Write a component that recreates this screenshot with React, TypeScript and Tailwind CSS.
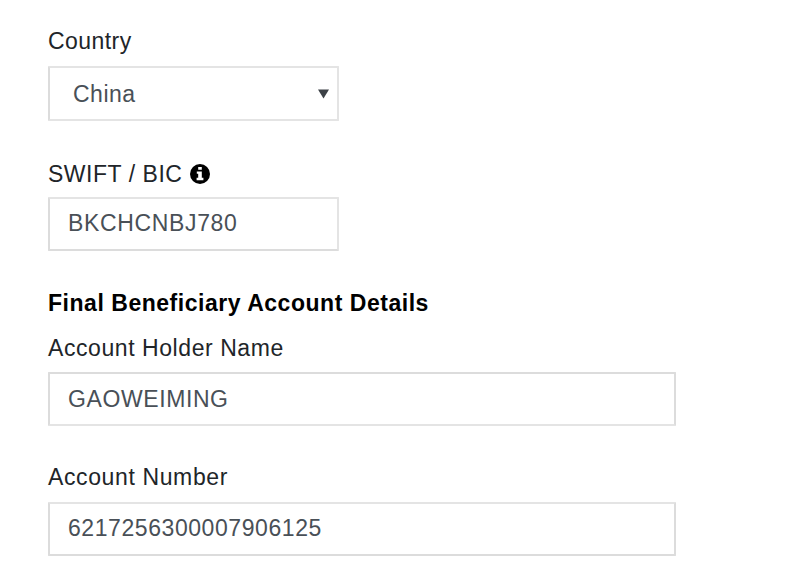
import React from "react";

function InfoIcon() {
  return (
    <svg viewBox="0 0 20 20" className="ml-[8px] h-[20px] w-[20px] shrink-0">
      <circle cx="10" cy="10" r="10" fill="#000" />
      <path d="M8.2 3h3.6v2.8H8.2zM6.8 7.4h5v6.4h1.6v2.4H6.6v-2.4h1.6V9.8H6.8z" fill="#fff" />
    </svg>
  );
}

const box = "flex items-center rounded-[1px] bg-white text-[#495057]";
const label = "flex h-[28px] items-center whitespace-nowrap";

export default function App() {
  return (
    <main className="h-[582px] w-[796px] overflow-hidden bg-white pl-[48px] pt-[27px] font-['Liberation_Sans',Arial,sans-serif] text-[23px] text-[#212529]">
      <div className={label}><span className="tracking-[0.45px]">Country</span></div>
      <div className={`${box} mt-[11px] h-[55px] w-[291px] justify-between border-2 border-b-[#e4e4e4] border-l-[#dcdcdc] border-r-[#e4e4e4] border-t-[#e4e4e4] pl-[23px] pr-[8px]`}>
        <span className="pt-px tracking-[0.5px]">China</span>
        <svg viewBox="0 0 12 10" className="h-[10px] w-[11px]" fill="#3c4146"><path d="M0 0h12L6 10z" /></svg>
      </div>
      <div className={`${label} mt-[39px]`}><span className="tracking-[0.53px]">SWIFT / BIC</span><InfoIcon /></div>
      <div className={`${box} mt-[9px] h-[54px] w-[291px] border-2 border-b-[#dcdcdc] border-l-[#dcdcdc] border-r-[#e4e4e4] border-t-[#e4e4e4] pb-[2px] pl-[18px]`}><span className="tracking-[0.65px]">BKCHCNBJ780</span></div>
      <div className={`${label} mt-[38px] font-bold text-black`}><span className="tracking-[0.53px]">Final Beneficiary Account Details</span></div>
      <div className={`${label} mt-[17px]`}><span className="tracking-[0.57px]">Account Holder Name</span></div>
      <div className={`${box} mt-[10px] h-[54px] w-[628px] border-2 border-b-[#e4e4e4] border-l-[#dcdcdc] border-r-[#dcdcdc] border-t-[#dcdcdc] pl-[18px]`}><span className="tracking-[0.6px]">GAOWEIMING</span></div>
      <div className={`${label} mt-[37px]`}><span className="tracking-[0.62px]">Account Number</span></div>
      <div className={`${box} mt-[11px] h-[54px] w-[628px] border-2 border-b-[#dcdcdc] border-l-[#dcdcdc] border-r-[#dcdcdc] border-t-[#e4e4e4] pb-[2px] pl-[18px]`}><span className="tracking-[0.57px]">6217256300007906125</span></div>
    </main>
  );
}
